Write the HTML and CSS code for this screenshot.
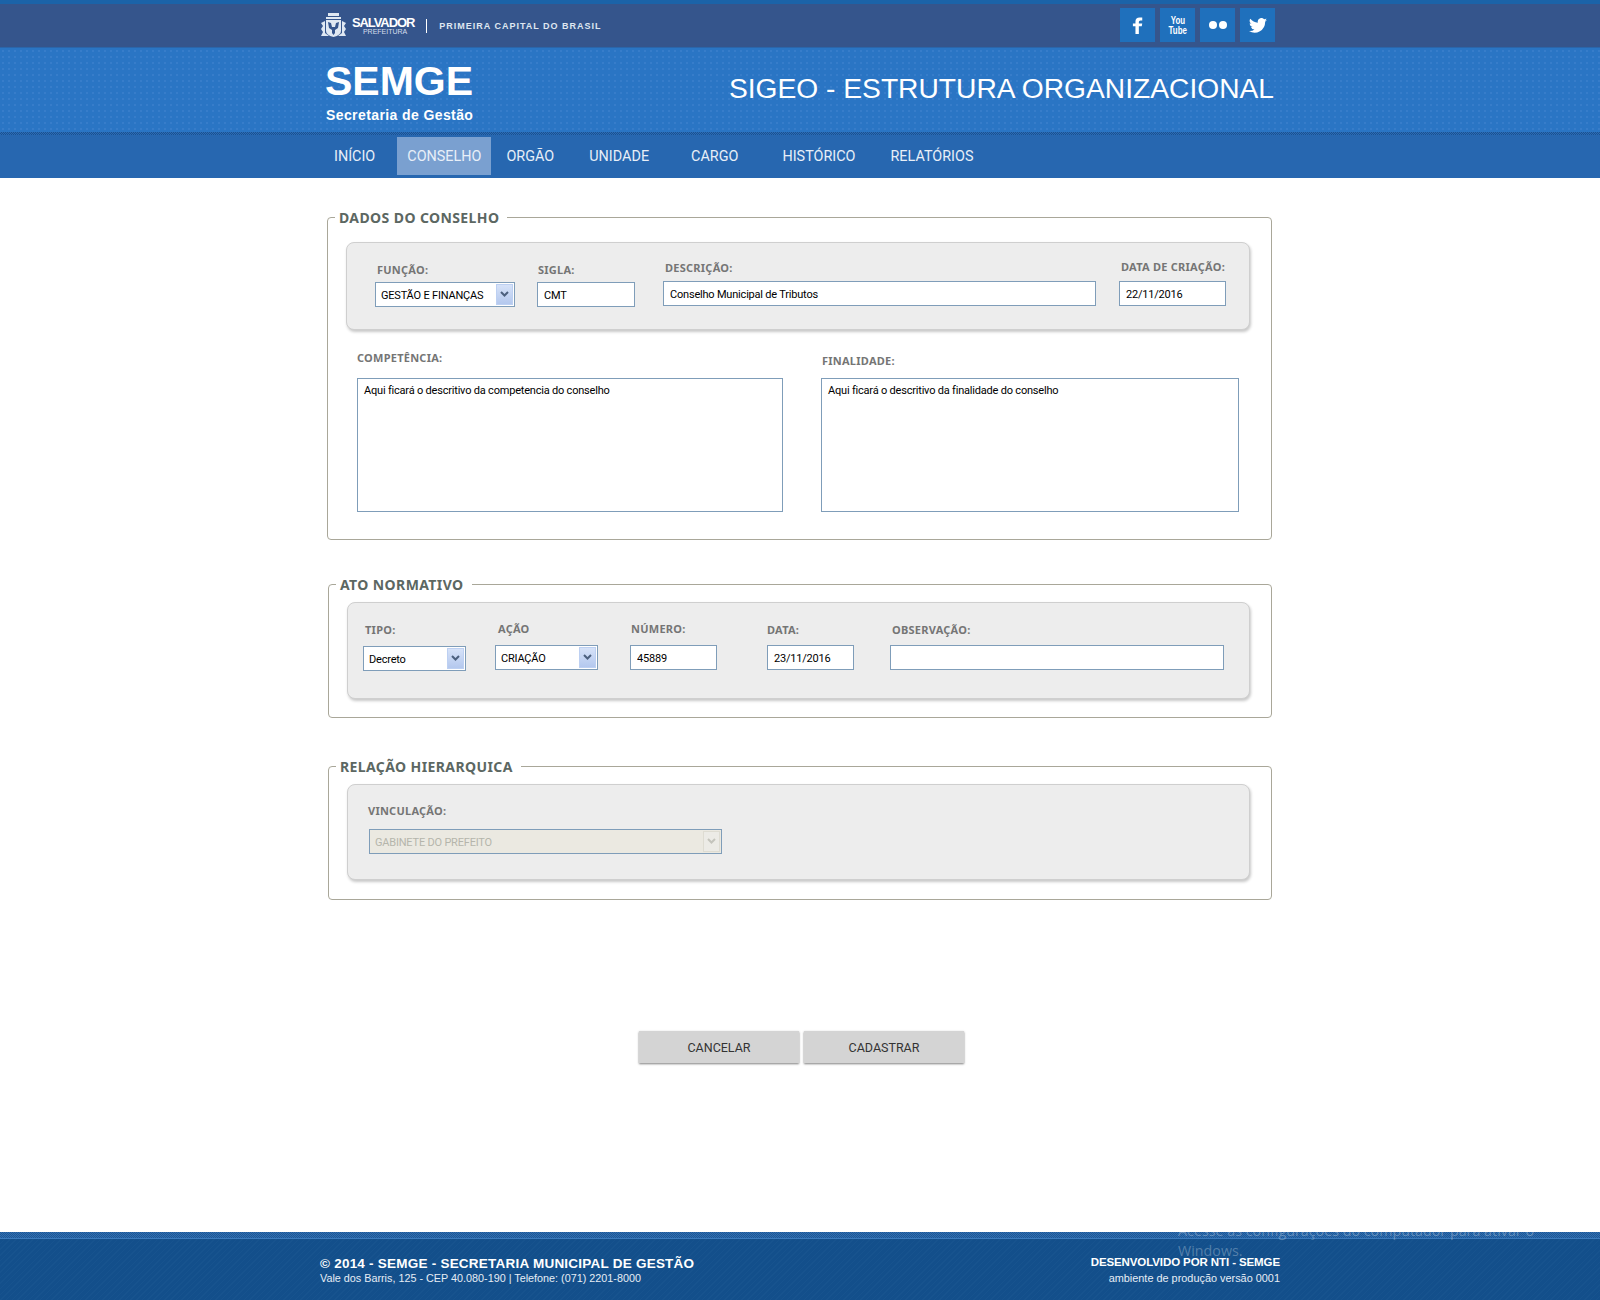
FILE: index.html
```html
<!DOCTYPE html>
<html lang="pt-BR">
<head>
  <meta charset="UTF-8" />
  <title>SIGEO - Estrutura Organizacional</title>
  <link rel="stylesheet" href="styles.css">
</head>
<body>
  <div class="topbar">
    <div class="wrap topbar-in">
      <div class="brand">
        <svg class="crest" width="27" height="25" viewBox="0 0 27 25">
          <path fill="#dfe8f2" d="M8 0h11v3H8zM6 4h15v2H6zM1 10l4-2v12l4 3H1l2-4-2-3 2-3zM26 10l-4-2v12l-4 3h8l-2-4 2-3-2-3z"/>
          <path fill="#dfe8f2" d="M6 7h15v11q0 4-7.500 6Q6 22 6 18z"/>
          <path fill="#35558c" d="M8 9l3 1 1 4h3l1-4 3-1-1 6-3 2v3l-1.500 2-1.500-2v-3l-3-2z"/>
        </svg>
        <div class="brand-name">
          <strong>SALVADOR</strong>
          <span>PREFEITURA</span>
        </div>
        <div class="brand-slogan">PRIMEIRA CAPITAL DO BRASIL</div>
      </div>
      <div class="social">
        <a class="social-btn">
          <svg width="12" height="17" viewBox="0 0 14 20"><path fill="#fff" d="M4 20V11H1V7.500h3V5q0-4.500 5-4.500h3v3.500h-2q-2 0-2 1.800v1.700h4l-.6 3.500H8v9z"/></svg>
        </a>
        <a class="social-btn social-yt"><span>You</span><span>Tube</span></a>
        <a class="social-btn social-fl"><i></i><i></i></a>
        <a class="social-btn">
          <svg width="18" height="15" viewBox="0 0 24 20"><path fill="#fff" d="M24 2.400a9.800 9.800 0 0 1-2.800.8A4.900 4.900 0 0 0 23.300.5a9.800 9.800 0 0 1-3.100 1.200 4.900 4.900 0 0 0-8.400 4.500A14 14 0 0 1 1.700 1a4.900 4.900 0 0 0 1.500 6.600 4.900 4.900 0 0 1-2.200-.6 4.900 4.900 0 0 0 3.900 4.900 4.900 4.900 0 0 1-2.200.1 4.900 4.900 0 0 0 4.600 3.400A9.900 9.900 0 0 1 0 17.400 14 14 0 0 0 21.500 5c1-.7 1.800-1.600 2.500-2.600z"/></svg>
        </a>
      </div>
    </div>
  </div>

  <header class="head">
    <div class="wrap head-in">
      <div class="head-logo">
        <div class="head-semge">SEMGE</div>
        <div class="head-sub">Secretaria de Gestão</div>
      </div>
      <div class="head-title">SIGEO - ESTRUTURA ORGANIZACIONAL</div>
    </div>
  </header>

  <nav class="nav">
    <ul class="wrap nav-list">
      <li>INÍCIO</li>
      <li class="active">CONSELHO</li>
      <li>ORGÃO</li>
      <li>UNIDADE</li>
      <li>CARGO</li>
      <li>HISTÓRICO</li>
      <li>RELATÓRIOS</li>
    </ul>
  </nav>

  <main class="wrap main">
    <fieldset class="box box-dados">
      <legend>DADOS DO CONSELHO</legend>
      <div class="panel panel-dados">
        <div class="field f-funcao">
          <label>FUNÇÃO:</label>
          <div class="sel">
            <select><option>GESTÃO E FINANÇAS</option></select>
            <span class="sel-btn"><svg width="9" height="7" viewBox="0 0 9 7"><path fill="none" stroke="#4c607e" stroke-width="2" d="M1 1l3.500 3.500L8 1"/></svg></span>
          </div>
        </div>
        <div class="field f-sigla">
          <label>SIGLA:</label>
          <input type="text" value="CMT">
        </div>
        <div class="field f-descricao">
          <label>DESCRIÇÃO:</label>
          <input type="text" value="Conselho Municipal de Tributos">
        </div>
        <div class="field f-criacao">
          <label>DATA DE CRIAÇÃO:</label>
          <input type="text" value="22/11/2016">
        </div>
      </div>
      <div class="texts">
        <div class="field f-comp">
          <label>COMPETÊNCIA:</label>
          <textarea>Aqui ficará o descritivo da competencia do conselho</textarea>
        </div>
        <div class="field f-final">
          <label>FINALIDADE:</label>
          <textarea>Aqui ficará o descritivo da finalidade do conselho</textarea>
        </div>
      </div>
    </fieldset>

    <fieldset class="box box-ato">
      <legend>ATO NORMATIVO</legend>
      <div class="panel panel-ato">
        <div class="field f-tipo">
          <label>TIPO:</label>
          <div class="sel">
            <select><option>Decreto</option></select>
            <span class="sel-btn"><svg width="9" height="7" viewBox="0 0 9 7"><path fill="none" stroke="#4c607e" stroke-width="2" d="M1 1l3.500 3.500L8 1"/></svg></span>
          </div>
        </div>
        <div class="field f-acao">
          <label>AÇÃO</label>
          <div class="sel">
            <select><option>CRIAÇÃO</option></select>
            <span class="sel-btn"><svg width="9" height="7" viewBox="0 0 9 7"><path fill="none" stroke="#4c607e" stroke-width="2" d="M1 1l3.500 3.500L8 1"/></svg></span>
          </div>
        </div>
        <div class="field f-numero">
          <label>NÚMERO:</label>
          <input type="text" value="45889">
        </div>
        <div class="field f-data">
          <label>DATA:</label>
          <input type="text" value="23/11/2016">
        </div>
        <div class="field f-obs">
          <label>OBSERVAÇÃO:</label>
          <input type="text" value="">
        </div>
      </div>
    </fieldset>

    <fieldset class="box box-rel">
      <legend>RELAÇÃO HIERARQUICA</legend>
      <div class="panel panel-rel">
        <div class="field f-vinc">
          <label>VINCULAÇÃO:</label>
          <div class="sel sel-off">
            <select disabled><option>GABINETE DO PREFEITO</option></select>
            <span class="sel-btn"><svg width="9" height="7" viewBox="0 0 9 7"><path fill="none" stroke="#c4c4bc" stroke-width="2" d="M1 1l3.500 3.500L8 1"/></svg></span>
          </div>
        </div>
      </div>
    </fieldset>

    <div class="actions">
      <button class="btn">CANCELAR</button>
      <button class="btn">CADASTRAR</button>
    </div>
  </main>

  <footer class="foot">
    <div class="wrap foot-in">
      <div>
        <div class="foot-title">© 2014 - SEMGE - SECRETARIA MUNICIPAL DE GESTÃO</div>
        <div class="foot-addr">Vale dos Barris, 125 - CEP 40.080-190 | Telefone: (071) 2201-8000</div>
      </div>
      <div class="foot-right">
        <div class="foot-dev">DESENVOLVIDO POR NTI - SEMGE</div>
        <div class="foot-env">ambiente de produção versão 0001</div>
      </div>
    </div>
  </footer>
  <div class="activate">Acesse as configurações do computador para ativar o Windows.</div>
</body>
</html>
```

FILE: styles.css
```css
* {
  box-sizing: border-box;
}
body {
  margin: 0;
  min-height: 1300px;
  display: flex;
  flex-direction: column;
  position: relative;
  background: #fff;
  font-family: "Noto Sans", sans-serif;
  overflow: hidden;
}
.wrap {
  width: 960px;
  margin-left: auto;
  margin-right: auto;
}

/* top bar */
.topbar {
  height: 48px;
  background: #35558c;
  border-top: 4px solid #1b63a8;
  border-bottom: 1px solid #2a66ab;
}
.topbar-in {
  display: flex;
  justify-content: space-between;
  height: 100%;
}
.brand {
  display: flex;
  align-items: center;
}
.crest {
  margin-right: 5px;
}
.brand-name {
  display: flex;
  flex-direction: column;
  align-items: center;
  font-family: "Liberation Sans", sans-serif;
  color: #fff;
  line-height: 1;
}
.brand-name strong {
  font-size: 13px;
  letter-spacing: -1.1px;
}
.brand-name span {
  font-size: 7px;
  color: #d5dfec;
  margin-top: -1px;
  margin-left: 4px;
}
.brand-slogan {
  margin-left: 12px;
  padding-left: 12px;
  border-left: 1px solid #fff;
  height: 14px;
  line-height: 14px;
  font-family: "Liberation Sans", sans-serif;
  font-size: 9px;
  font-weight: bold;
  letter-spacing: 1px;
  color: #dfe7f1;
}
.social {
  display: flex;
  gap: 5px;
  padding-top: 4px;
  margin-right: 5px;
}
.social-btn {
  width: 35px;
  height: 34px;
  background: #1f70bc;
  display: flex;
  align-items: center;
  justify-content: center;
  color: #fff;
}
.social-yt {
  flex-direction: column;
  font-family: "Liberation Sans", sans-serif;
  font-size: 11px;
  font-weight: bold;
  line-height: 10px;
}
.social-yt span {
  display: block;
  transform: scaleX(.72);
}
.social-fl {
  gap: 2px;
}
.social-fl i {
  width: 8px;
  height: 8px;
  border-radius: 50%;
  background: #fff;
}

/* blue header */
.head {
  height: 84px;
  background-color: #2a75c4;
  background-image: radial-gradient(circle, #377dca 1px, transparent 1.2px);
  background-size: 6px 6px;
}
.head-in {
  display: flex;
  justify-content: space-between;
  height: 100%;
  padding: 13px 6px 0 5px;
  color: #fff;
  font-family: "Liberation Sans", sans-serif;
}
.head-semge {
  font-size: 41px;
  font-weight: bold;
  line-height: 40px;
}
.head-sub {
  font-size: 14px;
  font-weight: bold;
  letter-spacing: .4px;
  margin-top: 6px;
  margin-left: 1px;
}
.head-title {
  font-size: 28.200px;
  line-height: 34px;
  margin-top: 10px;
}

/* nav */
.nav {
  height: 46px;
  background: #2767b0;
}
.nav::before {
  content: "";
  display: block;
  height: 3px;
  background: repeating-conic-gradient(#1c528f 0 25%, #2a6cb8 0 50%) 0 0 / 2px 2px;
}
.nav-list {
  display: flex;
  list-style: none;
  padding: 2px 0 0 4px;
  margin-top: 0;
  margin-bottom: 0;
  font-family: Roboto, sans-serif;
  font-size: 14.400px;
  color: #e8eff8;
}
.nav-list li {
  height: 38px;
  line-height: 39px;
  padding: 0 10px;
}
.nav-list li.active {
  background: #7aa0d0;
}
.nav-list li:nth-child(2) { margin-left: 12px; }
.nav-list li:nth-child(3) { margin-left: 5px; }
.nav-list li:nth-child(4) { margin-left: 15px; }
.nav-list li:nth-child(5) { margin-left: 22px; }
.nav-list li:nth-child(6) { margin-left: 24px; }
.nav-list li:nth-child(7) { margin-left: 15px; }

/* form */
.main {
  flex: 1;
  display: flex;
  flex-direction: column;
  padding-left: 7px;
  padding-right: 8px;
}
.box {
  margin: 0;
  padding: 0;
  border: 1px solid #a9a799;
  border-radius: 4px;
  min-width: 0;
}
.box legend {
  margin-left: 7px;
  padding: 2px 8px 0 4px;
  font-size: 14px;
  font-weight: bold;
  line-height: 20px;
  letter-spacing: .4px;
  color: #5c6762;
}
.box-dados {
  margin-top: 28px;
  height: 334px;
  margin-left: 0;
}
.box-ato {
  margin-top: 33px;
  height: 145px;
  margin-left: 1px;
}
.box-rel {
  margin-top: 37px;
  height: 145px;
  margin-left: 1px;
}
.panel {
  display: flex;
  background: #ededed;
  border: 1px solid #cfcfcf;
  border-radius: 8px;
  box-shadow: 1px 2px 3px rgba(0, 0, 0, .22);
  margin-left: 18px;
  margin-right: 21px;
}
.panel-dados {
  height: 88px;
  margin-top: 14px;
}
.panel-ato {
  height: 97px;
  margin-top: 7px;
}
.panel-rel {
  height: 96px;
  margin-top: 7px;
}
.field {
  display: flex;
  flex-direction: column;
}
.field label {
  font-size: 11px;
  font-weight: bold;
  line-height: 14px;
  letter-spacing: .25px;
  color: #757575;
}
.field input,
.field select,
.field textarea {
  display: block;
  width: 100%;
  height: 25px;
  margin: 0;
  padding: 1px 6px 0;
  border: 1px solid #7f9db9;
  border-radius: 0;
  background: #fff;
  font-family: Roboto, sans-serif;
  font-size: 11px;
  letter-spacing: -.2px;
  color: #000;
  outline: none;
}
.field select {
  padding-left: 5px;
  appearance: none;
  -webkit-appearance: none;
}
.sel {
  position: relative;
}
.sel-btn {
  position: absolute;
  top: 2px;
  right: 2px;
  bottom: 2px;
  width: 17px;
  display: flex;
  align-items: center;
  justify-content: center;
  background: linear-gradient(#d6e2f8, #b4c8ee);
  border: 1px solid #bdd0f2;
}
.sel-off select {
  background: #ebe9e1;
  color: #b5b5ab;
  opacity: 1;
}
.sel-off .sel-btn {
  background: #ecebe6;
  border-color: #dedcd2;
}

.f-funcao { width: 140px; margin: 20px 0 0 28px; }
.f-funcao label { margin-left: 2px; margin-bottom: 5px; }
.f-sigla { width: 98px; margin: 20px 0 0 22px; }
.f-sigla label { margin-left: 1px; margin-bottom: 5px; }
.f-descricao { width: 433px; margin: 18px 0 0 28px; }
.f-descricao label { margin-left: 2px; margin-bottom: 6px; }
.f-criacao { width: 107px; margin: 17px 0 0 23px; }
.f-criacao label { margin-left: 2px; margin-bottom: 7px; white-space: nowrap; }

.texts {
  display: flex;
  padding-left: 29px;
  margin-top: 21px;
}
.f-comp { width: 426px; }
.f-comp label { margin-bottom: 13px; }
.f-final { width: 418px; margin-left: 38px; margin-top: 3px; }
.f-final label { margin-left: 1px; margin-bottom: 10px; }
.field textarea {
  height: 134px;
  padding: 5px 6px;
  resize: none;
  line-height: 14px;
}

.f-tipo { width: 103px; margin: 20px 0 0 15px; }
.f-tipo label { margin-left: 2px; margin-bottom: 9px; }
.f-acao { width: 103px; margin: 19px 0 0 29px; }
.f-acao label { margin-left: 3px; margin-bottom: 9px; }
.f-numero { width: 87px; margin: 19px 0 0 32px; }
.f-numero label { margin-left: 1px; margin-bottom: 9px; }
.f-data { width: 87px; margin: 20px 0 0 50px; }
.f-data label { margin-bottom: 8px; }
.f-obs { width: 334px; margin: 20px 0 0 36px; }
.f-obs label { margin-left: 2px; margin-bottom: 8px; }

.f-vinc { width: 353px; margin: 19px 0 0 21px; }
.f-vinc label { margin-left: -1px; margin-bottom: 11px; }

.actions {
  display: flex;
  justify-content: center;
  gap: 5px;
  margin-top: 131px;
  margin-left: 4px;
}
.btn {
  width: 160px;
  height: 32px;
  padding: 0;
  border: 0;
  background: #d4d4d4;
  box-shadow: 0 1px 2px rgba(0, 0, 0, .5);
  font-family: Roboto, sans-serif;
  font-size: 12.500px;
  color: #333;
}

/* footer */
.foot {
  height: 68px;
  background-color: #134f8b;
  background-image: repeating-linear-gradient(135deg, #17538e 0 1px, transparent 1px 4px);
  color: #fff;
  font-family: "Liberation Sans", sans-serif;
}
.foot::before {
  content: "";
  display: block;
  height: 6px;
  border-bottom: 1px solid #3a7abc;
  background: repeating-conic-gradient(#2f6db0 0 25%, #1d5896 0 50%) 0 0 / 2px 2px;
}
.foot-in {
  display: flex;
  justify-content: space-between;
  padding-top: 17px;
}
.foot-title {
  font-size: 13.500px;
  font-weight: bold;
  line-height: 16px;
  letter-spacing: .23px;
}
.foot-addr {
  font-size: 10.800px;
  line-height: 14px;
  margin-top: -1px;
  color: #e6edf5;
}
.foot-right {
  text-align: right;
  margin-top: -2px;
}
.foot-dev {
  font-size: 11.500px;
  font-weight: bold;
  line-height: 16px;
  letter-spacing: -.1px;
}
.foot-env {
  font-size: 10.900px;
  line-height: 14px;
  margin-top: 1px;
  color: #e6edf5;
}
.activate {
  position: absolute;
  left: 1178px;
  top: 1221px;
  width: 370px;
  font-family: "Open Sans", sans-serif;
  font-size: 14.300px;
  line-height: 20px;
  color: rgba(255, 255, 255, .28);
}
```
